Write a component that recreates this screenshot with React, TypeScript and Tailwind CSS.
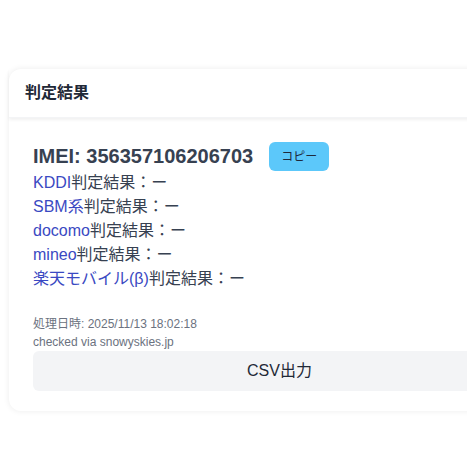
export default function App() {
  const rows = [
    { name: "KDDI", value: "ー" },
    { name: "SBM系", value: "ー" },
    { name: "docomo", value: "ー" },
    { name: "mineo", value: "ー" },
    { name: "楽天モバイル(β)", value: "ー" },
  ];

  return (
    <div
      className="w-[467px] h-[467px] overflow-hidden bg-white pt-[69px] pl-[9px]"
      style={{ fontFamily: '"Liberation Sans", Arial, "Noto Sans CJK JP", sans-serif' }}
    >
      <div className="w-[541px] rounded-xl bg-white shadow-[0_0_6px_rgba(0,0,0,0.08)]">
        <div className="h-[49px] px-4 flex items-center font-bold text-base text-[#1f2937] shadow-[0_2px_3px_rgba(0,0,0,0.06)] border-b border-gray-100">
          判定結果
        </div>
        <div className="px-6 pt-6 pb-5">
          <div className="flex items-center">
            <span className="text-[20px] font-bold text-[#374151] leading-[29px]">IMEI: 356357106206703</span>
            <button className="ml-4 h-[29px] px-3 rounded-md bg-[#5cc8fa] text-xs text-[#1e293b]">
              コピー
            </button>
          </div>
          <div className="text-base leading-6 text-[#374151]">
            {rows.map((r) => (
              <div key={r.name}>
                <span className="text-[#3a49c2]">{r.name}</span>判定結果：{r.value}
              </div>
            ))}
          </div>
          <div className="mt-6 text-xs leading-[18px] text-[#6b7280]">
            <div>処理日時: 2025/11/13 18:02:18</div>
            <div>checked via snowyskies.jp</div>
          </div>
          <button className="w-full h-10 rounded-md bg-[#f3f4f6] text-base text-[#1f2937]">CSV出力</button>
        </div>
      </div>
    </div>
  );
}
